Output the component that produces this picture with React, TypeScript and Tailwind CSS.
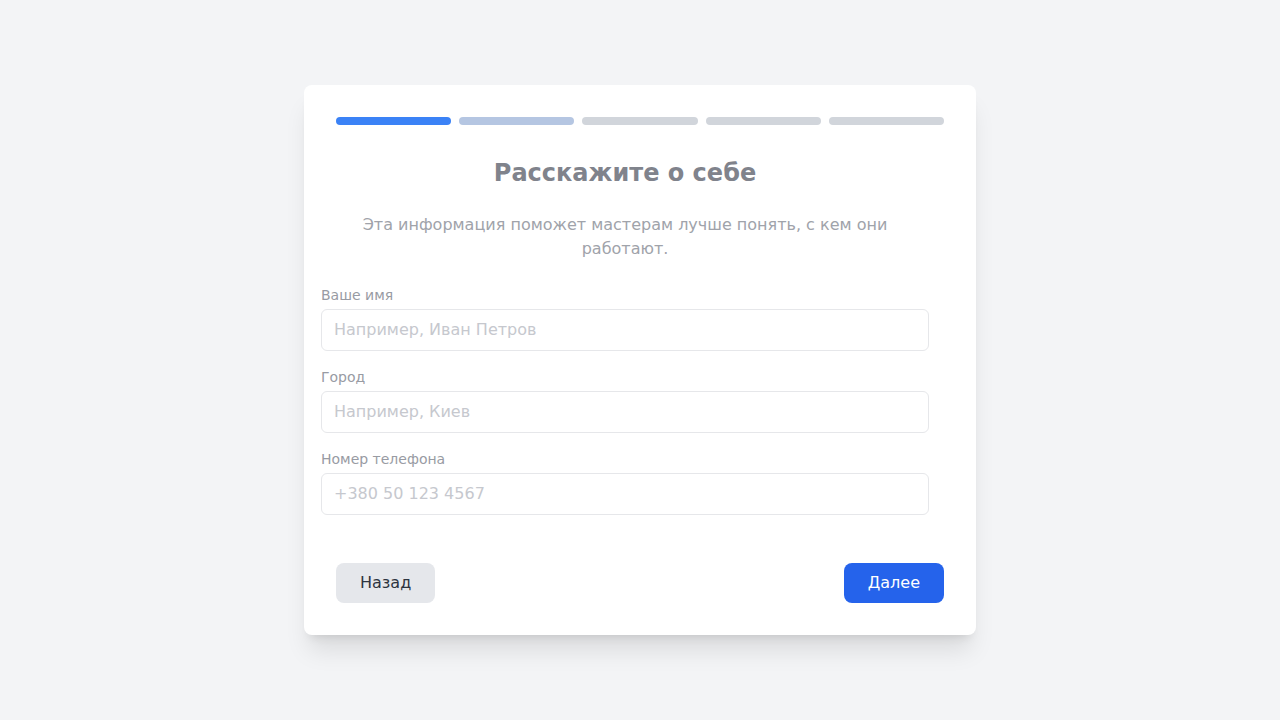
import { useState } from "react";

const steps = ["done", "next", "rest", "rest", "rest"] as const;

function Field({
  label,
  id,
  placeholder,
  type = "text",
}: {
  label: string;
  id: string;
  placeholder: string;
  type?: string;
}) {
  return (
    <div className="flex flex-col gap-1">
      <label htmlFor={id} className="text-sm leading-5 text-[#989ba3]">
        {label}
      </label>
      <input
        id={id}
        type={type}
        placeholder={placeholder}
        className="w-full rounded-md border border-[#e6e7ea] bg-white px-3 py-2 text-base leading-6 text-[#4b5563] placeholder:text-[#c6c8ce] focus:outline-none"
      />
    </div>
  );
}

export default function App() {
  const [step] = useState(1);

  return (
    <div className="flex min-h-screen items-center justify-center bg-[#f3f4f6] font-['DejaVu_Sans',sans-serif]">
      <div className="w-[672px] rounded-lg bg-white p-8 shadow-xl">
        {/* прогресс */}
        <div className="mb-8 flex gap-2">
          {steps.map((s, i) => (
            <div
              key={i}
              className={`h-2 flex-1 rounded-full ${
                s === "done"
                  ? "bg-[#3b82f6]"
                  : s === "next"
                  ? "bg-[#b5c6e2]"
                  : "bg-[#d1d5db]"
              }`}
            />
          ))}
        </div>

        {/* шаг {step} — контент в процессе анимации */}
        <div className="-ml-[15px] mr-[15px]" data-step={step}>
          <h2 className="mb-6 text-center text-2xl font-bold leading-8 text-[#80838c]">
            Расскажите о себе
          </h2>
          <p className="mx-auto mb-6 max-w-xl text-center text-base leading-6 text-[#a0a3aa]">
            Эта информация поможет мастерам лучше понять, с кем они работают.
          </p>

          <div className="flex flex-col gap-4">
            <Field label="Ваше имя" id="name" placeholder="Например, Иван Петров" />
            <Field label="Город" id="city" placeholder="Например, Киев" />
            <Field
              label="Номер телефона"
              id="phone"
              type="tel"
              placeholder="+380 50 123 4567"
            />
          </div>
        </div>

        <div className="mt-12 flex items-center justify-between">
          <button
            type="button"
            className="rounded-lg bg-[#e5e7eb] px-6 py-2 text-base leading-6 text-[#2d3440]"
          >
            Назад
          </button>
          <button
            type="button"
            className="rounded-lg bg-[#2563eb] px-6 py-2 text-base leading-6 text-white"
          >
            Далее
          </button>
        </div>
      </div>
    </div>
  );
}
